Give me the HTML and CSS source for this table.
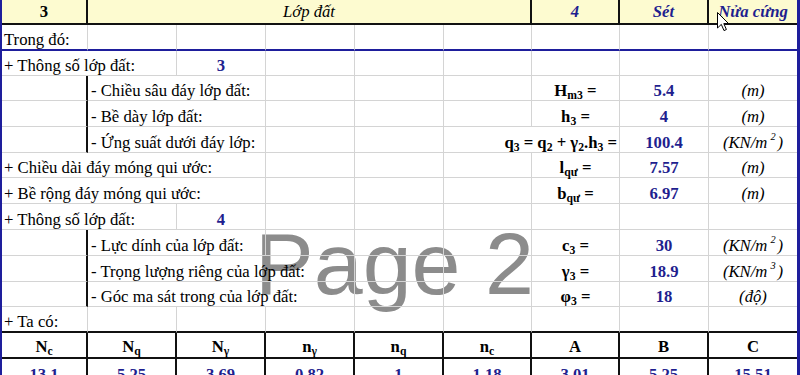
FILE: index.html
```html
<!DOCTYPE html>
<html lang="vi">
<head>
<meta charset="utf-8">
<title>Lớp đất</title>
<link rel="stylesheet" href="styles.css">
</head>
<body>
<div class="sheet">
  <div class="watermark">Page 2</div>
  <div class="grid">
    <!-- row 1 header -->
    <div class="c hd ctr bold bk">3</div>
    <div class="c hd ctr it bk s5">Lớp đất</div>
    <div class="c hd ctr bold it blue bk">4</div>
    <div class="c hd ctr bold it blue bk">Sét</div>
    <div class="c hd ctr bold it blue last">Nửa cứng</div>
    <!-- row 2 -->
    <div class="c pb">Trong đó:</div>
    <div class="c pb"></div><div class="c pb"></div><div class="c pb"></div><div class="c pb"></div>
    <div class="c pb"></div><div class="c pb"></div><div class="c pb"></div><div class="c pb last"></div>
    <!-- row 3 -->
    <div class="c s2">+ Thông số lớp đất:</div>
    <div class="c ctr bold blue">3</div>
    <div class="c"></div><div class="c"></div><div class="c"></div><div class="c"></div><div class="c"></div><div class="c last"></div>
    <!-- row 4 -->
    <div class="c bk"></div>
    <div class="c s2 ind">- Chiều sâu đáy lớp đất:</div>
    <div class="c"></div><div class="c"></div><div class="c"></div>
    <div class="c ctr bold"><span>H<span class="sub">m3</span> =</span></div>
    <div class="c ctr bold blue">5.4</div>
    <div class="c ctr it last">(m)</div>
    <!-- row 5 -->
    <div class="c bk"></div>
    <div class="c s2 ind">- Bề dày lớp đất:</div>
    <div class="c"></div><div class="c"></div><div class="c"></div>
    <div class="c ctr bold"><span>h<span class="sub">3</span> =</span></div>
    <div class="c ctr bold blue">4</div>
    <div class="c ctr it last">(m)</div>
    <!-- row 6 -->
    <div class="c bk"></div>
    <div class="c s2 ind">- Ứng suất dưới đáy lớp:</div>
    <div class="c"></div><div class="c"></div>
    <div class="c s2 rgt bold"><span>q<span class="sub">3</span> = q<span class="sub">2</span> + γ<span class="sub">2</span>.h<span class="sub">3</span> =</span></div>
    <div class="c ctr bold blue">100.4</div>
    <div class="c ctr it last"><span>(KN/m<span class="sup">2</span>)</span></div>
    <!-- row 7 -->
    <div class="c s3">+ Chiều dài đáy móng qui ước:</div>
    <div class="c"></div><div class="c"></div><div class="c"></div>
    <div class="c ctr bold"><span>l<span class="sub">qư</span> =</span></div>
    <div class="c ctr bold blue">7.57</div>
    <div class="c ctr it last">(m)</div>
    <!-- row 8 -->
    <div class="c s3">+ Bề rộng đáy móng qui ước:</div>
    <div class="c"></div><div class="c"></div><div class="c"></div>
    <div class="c ctr bold"><span>b<span class="sub">qư</span> =</span></div>
    <div class="c ctr bold blue">6.97</div>
    <div class="c ctr it last">(m)</div>
    <!-- row 9 -->
    <div class="c s2">+ Thông số lớp đất:</div>
    <div class="c ctr bold blue">4</div>
    <div class="c"></div><div class="c"></div><div class="c"></div><div class="c"></div><div class="c"></div><div class="c last"></div>
    <!-- row 10 -->
    <div class="c bk"></div>
    <div class="c s2 ind">- Lực dính của lớp đất:</div>
    <div class="c"></div><div class="c"></div><div class="c"></div>
    <div class="c ctr bold"><span>c<span class="sub">3</span> =</span></div>
    <div class="c ctr bold blue">30</div>
    <div class="c ctr it last"><span>(KN/m<span class="sup">2</span>)</span></div>
    <!-- row 11 -->
    <div class="c bk"></div>
    <div class="c s3 ind">- Trọng lượng riêng của lớp đất:</div>
    <div class="c"></div><div class="c"></div>
    <div class="c ctr bold"><span>γ<span class="sub">3</span> =</span></div>
    <div class="c ctr bold blue">18.9</div>
    <div class="c ctr it last"><span>(KN/m<span class="sup">3</span>)</span></div>
    <!-- row 12 -->
    <div class="c bk"></div>
    <div class="c s3 ind">- Góc ma sát trong của lớp đất:</div>
    <div class="c"></div><div class="c"></div>
    <div class="c ctr bold"><span>φ<span class="sub">3</span> =</span></div>
    <div class="c ctr bold blue">18</div>
    <div class="c ctr it last">(độ)</div>
    <!-- row 13 -->
    <div class="c bb">+ Ta có:</div>
    <div class="c bb"></div><div class="c bb"></div><div class="c bb"></div><div class="c bb"></div>
    <div class="c bb"></div><div class="c bb"></div><div class="c bb"></div><div class="c bb last"></div>
    <!-- row 14 -->
    <div class="c bb bk ctr bold th"><span>N<span class="sub">c</span></span></div>
    <div class="c bb bk ctr bold th"><span>N<span class="sub">q</span></span></div>
    <div class="c bb bk ctr bold th"><span>N<span class="sub">γ</span></span></div>
    <div class="c bb bk ctr bold th"><span>n<span class="sub">γ</span></span></div>
    <div class="c bb bk ctr bold th"><span>n<span class="sub">q</span></span></div>
    <div class="c bb bk ctr bold th"><span>n<span class="sub">c</span></span></div>
    <div class="c bb bk ctr bold th">A</div>
    <div class="c bb bk ctr bold th">B</div>
    <div class="c bb ctr bold th last">C</div>
    <!-- row 15 -->
    <div class="c bk ctr bold blue">13.1</div>
    <div class="c bk ctr bold blue">5.25</div>
    <div class="c bk ctr bold blue">3.69</div>
    <div class="c bk ctr bold blue">0.82</div>
    <div class="c bk ctr bold blue">1</div>
    <div class="c bk ctr bold blue">1.18</div>
    <div class="c bk ctr bold blue">3.01</div>
    <div class="c bk ctr bold blue">5.25</div>
    <div class="c ctr bold blue last">15.51</div>
  </div>
  <svg class="cursor" width="13" height="20" viewBox="0 0 13 20" aria-hidden="true">
    <path d="M0.5 0.5 L0.5 16 L4.3 12.4 L7 18.6 L9.4 17.5 L6.8 11.6 L11.6 11.6 Z" fill="#fff" stroke="#000" stroke-width="1" stroke-linejoin="round"/>
  </svg>
</div>
</body>
</html>
```

FILE: styles.css
```css
html, body {
  margin: 0;
  padding: 0;
  background: #ffffff;
}

body {
  font-family: "Liberation Serif", "Times New Roman", serif;
  font-size: 16.7px;
  color: #000;
}

.sheet {
  position: relative;
  width: 800px;
  height: 375px;
  overflow: hidden;
  background: #ffffff;
}

.watermark {
  position: absolute;
  left: 255px;
  top: 220px;
  font-family: "Liberation Sans", Arial, sans-serif;
  font-size: 88px;
  line-height: 88px;
  color: #8c8c8c;
  white-space: nowrap;
  z-index: 0;
}

.grid {
  position: relative;
  z-index: 1;
  box-sizing: border-box;
  width: 800px;
  display: grid;
  grid-template-columns: 86px 89px 89px 89px 89px 88px 88px 89px 88px;
  grid-template-rows: 25px 26px 25px 25px 26px 26px 25px 26px 26px 26px 26px 25px 26px 26px 26px;
  border-left: 2px solid #1e1e9c;
  border-right: 3px solid #1e1e9c;
}

.c {
  box-sizing: border-box;
  display: flex;
  align-items: flex-end;
  min-width: 0;
  padding: 0 2px;
  line-height: 18px;
  white-space: nowrap;
  border-right: 1px solid #d4d4d4;
  border-bottom: 1px solid #d4d4d4;
}

.last { border-right: none; }

.s2 { grid-column: span 2; }
.s3 { grid-column: span 3; }
.s5 { grid-column: span 5; }

.ind { padding-left: 3px; }

.ctr { justify-content: center; }
.rgt { justify-content: flex-end; padding-right: 2px; }

.bold { font-weight: bold; }
.it { font-style: italic; }
.blue { color: #1f1f8f; }

.hd {
  background: #fdfbd0;
  border-bottom: 2px solid #111;
  padding-bottom: 2px;
}

.bk { border-right: 2px solid #111; }
.hd.last { border-right: none; }

.pb { border-bottom: 2px solid #1e1e9c; }

.bb { border-bottom: 2px solid #111; }

.th { padding-bottom: 1px; }

.sub {
  font-size: 70%;
  line-height: 0;
  position: relative;
  top: 0.28em;
}

.sup {
  font-size: 62%;
  line-height: 0;
  position: relative;
  top: -0.75em;
  margin: 0 2px 0 3px;
}

.cursor {
  position: absolute;
  left: 717px;
  top: 12px;
  z-index: 2;
}
```
